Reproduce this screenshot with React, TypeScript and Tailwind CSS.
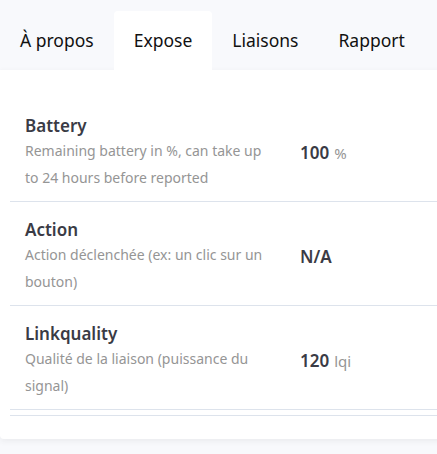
import React from 'react';

const tabs = ['À propos', 'Expose', 'Liaisons', 'Rapport'];

const rows = [
  { name: 'Battery', desc: 'Remaining battery in %, can take up to 24 hours before reported', value: '100', unit: '%' },
  { name: 'Action', desc: 'Action déclenchée (ex: un clic sur un bouton)', value: 'N/A', unit: '' },
  { name: 'Linkquality', desc: 'Qualité de la liaison (puissance du signal)', value: '120', unit: 'lqi' },
];

export default function App() {
  return (
    <div className="min-h-screen w-[437px] overflow-hidden bg-[#f8f9fc] pt-[11px] font-['Noto_Sans',sans-serif]">
      {/* Tabs */}
      <div className="flex h-[59px] items-stretch">
        {tabs.map((t) => (
          <div
            key={t}
            className={`flex items-center px-[20px] text-[17.5px] text-[#111] ${
              t === 'Expose' ? 'rounded-t-[4px] bg-white' : ''
            }`}
          >
            {t}
          </div>
        ))}
      </div>

      {/* Card */}
      <div className="w-[460px] rounded-b-[4px] bg-white pb-[23px] pl-[10px] pt-[28px] shadow-[0_2px_6px_rgba(58,59,69,0.08)]">
        {rows.map((r, i) => (
          <div
            key={r.name}
            className={`flex items-center border-[#dde3ec] ${i > 0 ? 'border-t' : ''} pb-[10px] pt-[16px]`}
          >
            <div className="w-[290px] shrink-0 pl-[15px] pr-[30px]">
              <div className="text-[17px] font-semibold leading-[24px] text-[#3a3b45]">{r.name}</div>
              <div className="text-[14px] leading-[26.5px] text-[#959595]">{r.desc}</div>
            </div>
            <div className="text-[17px] text-[#3a3b45]">
              <span className="font-semibold">{r.value}</span>
              {r.unit && <span className="ml-[5px] text-[15px] text-[#959595]">{r.unit}</span>}
            </div>
          </div>
        ))}
        <div className="h-[7px] border-y border-[#dde3ec]" />
      </div>
    </div>
  );
}
